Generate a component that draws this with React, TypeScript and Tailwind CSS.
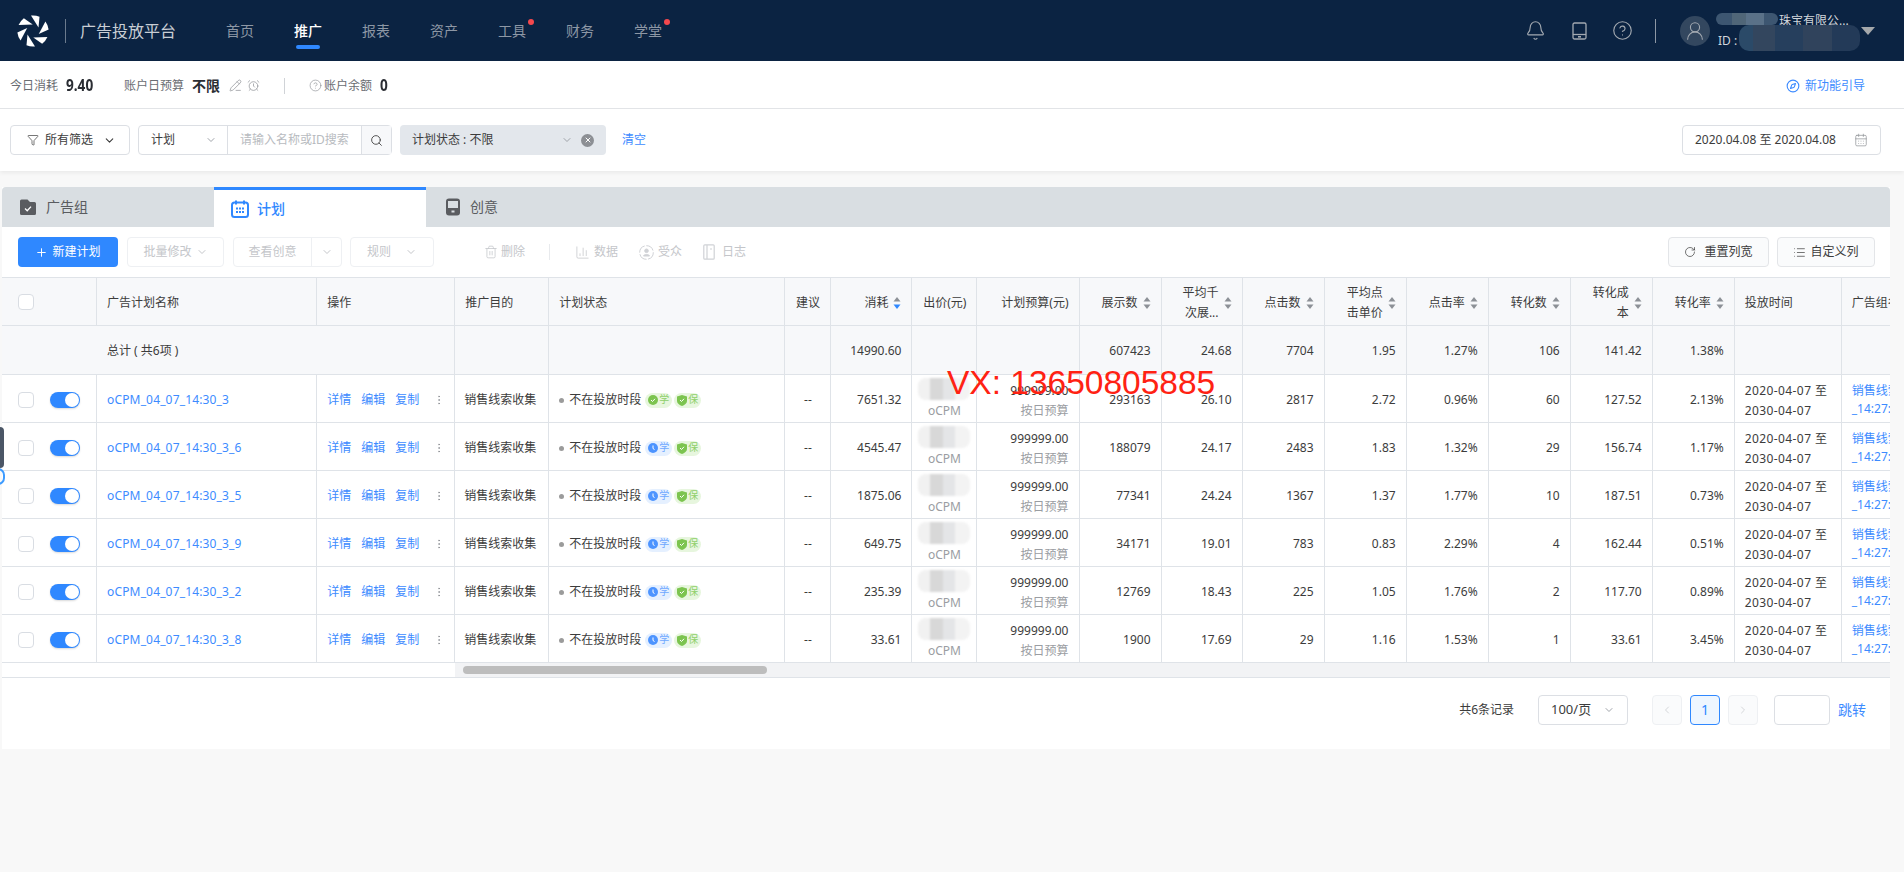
import {
  AlarmClock,
  Bell,
  CalendarDays,
  ChartColumn,
  ChevronDown,
  ChevronLeft,
  ChevronRight,
  CircleHelp,
  Compass,
  EllipsisVertical,
  Filter,
  List,
  PencilLine,
  Plus,
  RotateCw,
  Search,
  Trash2,
  UserRound,
  X,
} from "lucide-react"

const navItems = [
  { label: "首页" },
  { label: "推广", active: true },
  { label: "报表" },
  { label: "资产" },
  { label: "工具", dot: true },
  { label: "财务" },
  { label: "学堂", dot: true },
]

const rows = [
  { name: "oCPM_04_07_14:30_3", learned: true, cost: "7651.32", show: "293163", cpm: "26.10", click: "2817", cpc: "2.72", ctr: "0.96%", conv: "60", cpa: "127.52", cvr: "2.13%" },
  { name: "oCPM_04_07_14:30_3_6", cost: "4545.47", show: "188079", cpm: "24.17", click: "2483", cpc: "1.83", ctr: "1.32%", conv: "29", cpa: "156.74", cvr: "1.17%" },
  { name: "oCPM_04_07_14:30_3_5", cost: "1875.06", show: "77341", cpm: "24.24", click: "1367", cpc: "1.37", ctr: "1.77%", conv: "10", cpa: "187.51", cvr: "0.73%" },
  { name: "oCPM_04_07_14:30_3_9", cost: "649.75", show: "34171", cpm: "19.01", click: "783", cpc: "0.83", ctr: "2.29%", conv: "4", cpa: "162.44", cvr: "0.51%" },
  { name: "oCPM_04_07_14:30_3_2", cost: "235.39", show: "12769", cpm: "18.43", click: "225", cpc: "1.05", ctr: "1.76%", conv: "2", cpa: "117.70", cvr: "0.89%" },
  { name: "oCPM_04_07_14:30_3_8", cost: "33.61", show: "1900", cpm: "17.69", click: "29", cpc: "1.16", ctr: "1.53%", conv: "1", cpa: "33.61", cvr: "3.45%" },
]

const colWidths = [95, 220, 138, 94, 236, 46, 81, 65, 102, 82, 81, 82, 82, 82, 82, 82, 82, 107, 120]

function Logo() {
  return (
    <svg width="32" height="32" viewBox="-16 -16 32 32" fill="#fff">
      {[0, 60, 120, 180, 240, 300].map((a) => (
        <path key={a} transform={`rotate(${a})`} d="M-2 -15.5 Q2.500 -16 6.500 -14.300 L5.500 -3.500 Z" />
      ))}
    </svg>
  )
}

function TabletIcon({ color = "currentColor" }: { color?: string }) {
  return (
    <svg width="15" height="18" viewBox="0 0 15 18" fill="none" stroke={color} strokeWidth="1.3">
      <rect x="1" y="1" width="13" height="16" rx="1.5" />
      <path d="M1 12.5h13" />
      <path d="M6 14.8h3" strokeWidth="1.6" />
    </svg>
  )
}

function GroupIcon() {
  return (
    <svg width="18" height="18" viewBox="0 0 18 18">
      <path d="M1 3a1.5 1.5 0 0 1 1.5-1.5h6L11 4h4.5A1.5 1.5 0 0 1 17 5.5V15.5a1.5 1.5 0 0 1-1.5 1.5h-13A1.5 1.5 0 0 1 1 15.5z" fill="#5a5c60" />
      <path d="M6 10.5l2.2 2.2L12 8.6" fill="none" stroke="#fff" strokeWidth="1.3" />
    </svg>
  )
}

function PlanIcon() {
  return (
    <svg width="18" height="18" viewBox="0 0 18 18">
      <rect x="1" y="2.5" width="16" height="14.5" rx="2.5" fill="none" stroke="#2f88ff" strokeWidth="2" />
      <path d="M5 0.5v4M13 0.5v4" stroke="#2f88ff" strokeWidth="2" />
      <path d="M5 7.5h2v2H5zM8 7.5h2v2H8zM11 7.5h2v2h-2zM5 11h2v2H5zM8 11h2v2H8zM11 11h2v2h-2z" fill="#2f88ff" />
    </svg>
  )
}

function CreativeIcon() {
  return (
    <svg width="16" height="18" viewBox="0 0 16 18">
      <rect x="1" y="0.5" width="14" height="17" rx="3" fill="#5a5c60" />
      <rect x="3" y="3" width="10" height="7" fill="#d9dee2" />
      <rect x="6.5" y="12.5" width="3" height="2" fill="#d9dee2" />
    </svg>
  )
}

function LogBookIcon() {
  return (
    <svg width="12" height="16" viewBox="0 0 12 16" fill="none" stroke="#d0d2d6" strokeWidth="1.2">
      <rect x="0.8" y="0.8" width="10.4" height="14.4" rx="1" />
      <path d="M4 1v14M7 5h2" />
    </svg>
  )
}

function AudienceIcon() {
  return (
    <svg width="15" height="15" viewBox="0 0 15 15" fill="none" stroke="#d0d2d6">
      <circle cx="7.5" cy="7.5" r="6.8" strokeDasharray="9 1.5" />
      <circle cx="7.5" cy="5.8" r="1.8" fill="#d0d2d6" />
      <path d="M4.5 11c.5-2 5.500-2 6 0z" fill="#d0d2d6" />
    </svg>
  )
}

function SortIcon({ down }: { down?: boolean }) {
  return (
    <svg width="8" height="14" viewBox="0 0 8 14" className="shrink-0">
      <path d="M4 1l3.500 4.500h-7z" fill="#8c9096" />
      <path d="M4 13l3.500-4.500h-7z" fill={down ? "#2f88ff" : "#8c9096"} />
    </svg>
  )
}

function Checkbox() {
  return <span className="block w-4 h-4 rounded-sm border border-[#d9dde3] bg-white" />
}

function Badge({ kind, label, learned }: { kind: "blue" | "green"; label: string; learned?: boolean }) {
  return (
    <span
      className={
        kind === "blue"
          ? "flex items-center gap-px h-[15px] w-[27px] pl-[3px] rounded-full bg-[#e5f0ff] text-[#6fa8ff] text-[10px]"
          : "flex items-center gap-px h-[15px] w-[27px] pl-[3px] rounded-full bg-[#e7f6de] text-[#8fd06a] text-[10px]"
      }
    >
      {kind === "blue" ? (
        <svg width="10" height="10" viewBox="0 0 10 10">
          <circle cx="5" cy="5" r="5" fill="#4d94ff" />
          <path d="M5 2.500v3l1.500 1" fill="none" stroke="#fff" />
        </svg>
      ) : learned ? (
        <svg width="10" height="10" viewBox="0 0 10 10">
          <circle cx="5" cy="5" r="5" fill="#7cc44f" />
          <path d="M3 5l1.500 1.500L7 3.800" fill="none" stroke="#fff" />
        </svg>
      ) : (
        <svg width="10" height="11" viewBox="0 0 10 11">
          <path d="M5 0l5 1.500V6c0 2.500-2.500 4-5 5-2.500-1-5-2.500-5-5V1.500z" fill="#7cc44f" />
          <path d="M3 5l1.500 1.500L7 3.800" fill="none" stroke="#fff" />
        </svg>
      )}
      {label}
    </span>
  )
}

function Mosaic() {
  return (
    <div className="flex w-[52px] h-[22px] rounded-lg overflow-hidden blur-[1px] mb-[1px]">
      <span className="w-[12px] bg-[#f1f1f1]" />
      <span className="w-[13px] bg-[#d8d8d8]" />
      <span className="w-[12px] bg-[#e4e5e7]" />
      <span className="w-[15px] bg-[#f3f3f3]" />
    </div>
  )
}

const line = "border-r border-b border-[#dfe3e8]"
const headLeft = `${line} pl-[10px] pt-[3px] text-left font-normal`
const bodyCell = `${line} pt-[3px]`
const numCell = `${line} pt-[3px] pr-[10px] text-right`
const totalCell = `${line} pt-[2px] pr-[10px] text-right`

function HeadNum({ label, sort = true, down, wrap }: { label: string; sort?: boolean; down?: boolean; wrap?: boolean }) {
  return (
    <th className={`${line} px-[10px] pt-[3px] font-normal`}>
      <div className="flex items-center justify-end gap-[5px]">
        <span className={wrap ? "w-[36px] text-right leading-5" : "whitespace-nowrap"}>{label}</span>
        {sort && <SortIcon down={down} />}
      </div>
    </th>
  )
}

export default function App() {
  return (
    <div className="relative h-[872px] w-[1904px] overflow-hidden bg-[#f8f8f8] text-xs text-[#3c3c3c] font-['Noto_Sans','Noto_Sans_CJK_SC',sans-serif]">
      {/* top bar */}
      <header className="flex items-center h-[61px] bg-[#0b2342]">
        <div className="ml-[17px]">
          <Logo />
        </div>
        <span className="ml-[16px] w-px h-6 bg-[#6b7a8d]" />
        <span className="ml-[14px] text-base text-[#c9ced5]">广告投放平台</span>
        <nav className="ml-[50px] flex gap-[40px] text-sm text-[#8d97a5]">
          {navItems.map((n) => (
            <div key={n.label} className="relative h-[61px] flex items-center">
              <span className={n.active ? "text-white font-medium" : ""}>{n.label}</span>
              {n.dot && <span className="absolute left-[30px] top-[19px] w-[6px] h-[6px] rounded-full bg-[#f5484d]" />}
              {n.active && <span className="absolute left-[2px] bottom-[12px] w-6 h-1 rounded-sm bg-[#2f88ff]" />}
            </div>
          ))}
        </nav>
        <div className="ml-auto flex items-center text-[#a3a9b1]">
          <Bell size={21} strokeWidth={1.3} />
          <span className="ml-[26px]">
            <TabletIcon />
          </span>
          <span className="ml-[25px]">
            <CircleHelp size={21} strokeWidth={1.3} />
          </span>
          <span className="ml-[22px] w-px h-6 bg-[#8d97a5]" />
          <span className="ml-[24px] w-[30px] h-[30px] rounded-full bg-[#33475f] flex items-center justify-center">
            <UserRound size={22} strokeWidth={1.2} />
          </span>
          <div className="relative ml-[8px] w-[129px] h-[40px] text-[#d2d6db] whitespace-nowrap">
            <div className="flex flex-col h-full">
              <span className="pl-[61px] leading-5">珠宝有限公...</span>
              <span className="leading-5">ID :</span>
            </div>
            <div className="absolute left-[-2px] top-[2px] flex w-[62px] h-[12px] rounded-full overflow-hidden">
              <span className="w-[16px] bg-[#3d5671]" />
              <span className="w-[14px] bg-[#506678]" />
              <span className="w-[18px] bg-[#5a7188]" />
              <span className="w-[14px] bg-[#3d5671]" />
            </div>
            <div className="absolute left-[21px] top-[14px] flex w-[121px] h-[26px] rounded-[10px] overflow-hidden">
              <span className="w-[14px] bg-[#2b4a68]" />
              <span className="w-[22px] bg-[#33465e]" />
              <span className="w-[28px] bg-[#263f5d]" />
              <span className="w-[29px] bg-[#30435c]" />
              <span className="w-[28px] bg-[#233a58]" />
            </div>
          </div>
          <span className="relative ml-[14px] mr-[29px] w-0 h-0 border-x-[7px] border-x-transparent border-t-[8px] border-t-[#a5a8ab]" />
        </div>
      </header>

      {/* account stats */}
      <div className="flex items-center h-[48px] pl-[10px] pt-[2px] bg-white border-b border-[#e3e5e8] text-[#6a6d72]">
        <span>今日消耗</span>
        <span className="ml-[8px] w-[25px] text-[16px] font-bold text-[#2a2d33] scale-x-[0.85] origin-left">9.40</span>
        <span className="ml-[33px]">账户日预算</span>
        <span className="ml-[8px] text-sm font-bold text-[#2a2d33]">不限</span>
        <PencilLine size={13} strokeWidth={1.3} className="ml-[9px] text-[#8c8f94]" />
        <AlarmClock size={13} strokeWidth={1.3} className="ml-[5px] text-[#8c8f94]" />
        <span className="ml-[24px] w-px h-4 bg-[#d0d3d7]" />
        <CircleHelp size={13} strokeWidth={1.2} className="ml-[24px] text-[#8c8f94]" />
        <span className="ml-[2px]">账户余额</span>
        <span className="ml-[8px] text-[16px] font-bold text-[#2a2d33] scale-x-[0.85] origin-left">0</span>
        <span className="ml-auto mr-[39px] flex items-center gap-[5px] text-[#3d8bff]">
          <Compass size={14} strokeWidth={1.9} />
          新功能引导
        </span>
      </div>

      {/* filters */}
      <div className="flex items-center h-[62px] pl-[10px] bg-white shadow-[0_2px_4px_rgba(0,0,0,0.06)]">
        <button className="flex items-center w-[120px] h-[30px] pl-[16px] rounded border border-[#dcdfe4] bg-white">
          <Filter size={12} strokeWidth={1.4} />
          <span className="ml-[6px]">所有筛选</span>
          <ChevronDown size={13} className="ml-[10px]" />
        </button>
        <div className="ml-[8px] flex items-center w-[254px] h-[30px] rounded border border-[#dcdfe4] bg-white">
          <span className="flex items-center justify-between w-[89px] h-full pl-[12px] pr-[10px] border-r border-[#dcdfe4]">
            计划
            <ChevronDown size={12} className="text-[#a0a4aa]" />
          </span>
          <span className="flex-1 pl-[12px] text-[#b8bbc0]">请输入名称或ID搜索</span>
          <span className="flex items-center justify-center w-[30px] h-full border-l border-[#dcdfe4] bg-[#f7f8fa]">
            <Search size={13} strokeWidth={1.6} />
          </span>
        </div>
        <div className="ml-[8px] flex items-center w-[206px] h-[30px] pl-[12px] pr-[12px] rounded bg-[#e3e7ec]">
          <span>计划状态 : 不限</span>
          <ChevronDown size={12} className="ml-auto text-[#a0a4aa]" />
          <span className="ml-[8px] flex items-center justify-center w-[13px] h-[13px] rounded-full bg-[#8c8f94]">
            <X size={8} strokeWidth={3} className="text-white" />
          </span>
        </div>
        <span className="ml-[16px] text-[#3d8bff]">清空</span>
        <div className="ml-auto mr-[23px] flex items-center justify-between w-[199px] h-[30px] pl-[12px] pr-[12px] rounded border border-[#dcdfe4] text-[#3c3c3c]">
          <span>2020.04.08 至 2020.04.08</span>
          <CalendarDays size={14} strokeWidth={1.2} className="text-[#8c8f94]" />
        </div>
      </div>

      {/* main card */}
      <div className="relative mt-[16px] ml-[2px] w-[1888px] h-[562px] bg-white">
        <div className="flex h-[40px] rounded-t bg-[#d9dee2] text-sm text-[#5a5c60]">
          <div className="flex items-center w-[212px] pl-[17px] gap-[9px]">
            <GroupIcon />
            广告组
          </div>
          <div className="flex items-center w-[212px] pl-[17px] gap-[8px] bg-white border-t-[3px] border-[#2f88ff] text-[#2f88ff] font-medium">
            <PlanIcon />
            计划
          </div>
          <div className="flex items-center pl-[19px] gap-[9px]">
            <CreativeIcon />
            创意
          </div>
        </div>

        {/* toolbar */}
        <div className="flex items-center h-[50px] pl-[16px] text-[#c4c6ca]">
          <button className="flex items-center justify-center gap-[4px] w-[100px] h-[30px] rounded bg-[#2f88ff] text-white">
            <Plus size={13} strokeWidth={1.8} />
            新建计划
          </button>
          <button className="ml-[9px] flex items-center justify-center gap-[4px] w-[97px] h-[30px] rounded border border-[#eef0f3]">
            批量修改
            <ChevronDown size={12} />
          </button>
          <div className="ml-[9px] flex items-center w-[109px] h-[30px] rounded border border-[#eef0f3]">
            <span className="flex-1 text-center border-r border-[#eef0f3] leading-[28px]">查看创意</span>
            <span className="flex justify-center w-[29px]">
              <ChevronDown size={12} />
            </span>
          </div>
          <button className="ml-[8px] flex items-center justify-between w-[84px] h-[30px] px-[16px] rounded border border-[#eef0f3]">
            规则
            <ChevronDown size={12} />
          </button>
          <Trash2 size={14} strokeWidth={1.3} className="ml-[50px]" />
          <span className="ml-[3px]">删除</span>
          <span className="ml-[24px] w-px h-4 bg-[#e8eaed]" />
          <ChartColumn size={15} strokeWidth={1.2} className="ml-[25px]" />
          <span className="ml-[4px]">数据</span>
          <span className="ml-[21px]">
            <AudienceIcon />
          </span>
          <span className="ml-[4px]">受众</span>
          <span className="ml-[21px]">
            <LogBookIcon />
          </span>
          <span className="ml-[7px]">日志</span>
          <button className="ml-auto flex items-center justify-center gap-[8px] w-[101px] h-[30px] rounded border border-[#e3e5e8] bg-[#fafbfc] text-[#3c3c3c]">
            <RotateCw size={12} strokeWidth={1.4} />
            重置列宽
          </button>
          <button className="ml-[8px] mr-[15px] flex items-center justify-center gap-[4px] w-[98px] h-[30px] rounded border border-[#e3e5e8] bg-[#fafbfc] text-[#3c3c3c]">
            <List size={13} strokeWidth={1.3} />
            自定义列
          </button>
        </div>

        {/* plans table */}
        <div className="overflow-hidden">
          <table className="table-fixed border-separate border-spacing-0 w-[1960px] border-t border-[#dfe3e8]">
            <colgroup>
              {colWidths.map((w, i) => (
                <col key={i} style={{ width: w }} />
              ))}
            </colgroup>
            <thead>
              <tr className="h-[48px] bg-[#f7f8fa] text-[#3c3c3c]">
                <th className={`${line} pl-[16px]`}>
                  <Checkbox />
                </th>
                <th className={headLeft}>广告计划名称</th>
                <th className={headLeft}>操作</th>
                <th className={headLeft}>推广目的</th>
                <th className={headLeft}>计划状态</th>
                <th className={`${line} pt-[3px] text-center font-normal`}>建议</th>
                <HeadNum label="消耗" down />
                <HeadNum label="出价(元)" sort={false} />
                <HeadNum label="计划预算(元)" sort={false} />
                <HeadNum label="展示数" />
                <HeadNum label="平均千次展..." wrap />
                <HeadNum label="点击数" />
                <HeadNum label="平均点击单价" wrap />
                <HeadNum label="点击率" />
                <HeadNum label="转化数" />
                <HeadNum label="转化成本" wrap />
                <HeadNum label="转化率" />
                <th className={headLeft}>投放时间</th>
                <th className="border-b border-[#dfe3e8] pl-[10px] pt-[3px] text-left font-normal whitespace-nowrap overflow-hidden">广告组名称</th>
              </tr>
            </thead>
            <tbody>
              <tr className="h-[49px] bg-[#f7f8fa]">
                <td colSpan={3} className={`${line} pt-[2px] pl-[105px]`}>总计 ( 共6项 )</td>
                <td className={line} />
                <td className={line} />
                <td className={line} />
                <td className={totalCell}>14990.60</td>
                <td className={line} />
                <td className={line} />
                <td className={totalCell}>607423</td>
                <td className={totalCell}>24.68</td>
                <td className={totalCell}>7704</td>
                <td className={totalCell}>1.95</td>
                <td className={totalCell}>1.27%</td>
                <td className={totalCell}>106</td>
                <td className={totalCell}>141.42</td>
                <td className={totalCell}>1.38%</td>
                <td className={line} />
                <td className="border-b border-[#dfe3e8]" />
              </tr>
              {rows.map((r) => (
                <tr key={r.name} className="h-[48px]">
                  <td className={`${bodyCell} pl-[16px]`}>
                    <div className="flex items-center gap-[16px]">
                      <Checkbox />
                      <span className="flex items-center justify-end w-[30px] h-4 pr-[1px] rounded-full bg-[#2f88ff] shadow-[0_1px_2px_rgba(0,0,0,0.15)]">
                        <span className="w-[14px] h-[14px] rounded-full bg-white" />
                      </span>
                    </div>
                  </td>
                  <td className={`${bodyCell} pl-[10px] text-[#3d8bff] tracking-[0.15px]`}>{r.name}</td>
                  <td className={`${bodyCell} pl-[10px] text-[#3d8bff]`}>
                    <div className="flex items-center gap-[10px]">
                      <span>详情</span>
                      <span>编辑</span>
                      <span>复制</span>
                      <EllipsisVertical size={12} strokeWidth={1.5} className="ml-[4px] text-[#8c8f94]" />
                    </div>
                  </td>
                  <td className={`${bodyCell} pl-[9px] whitespace-nowrap`}>销售线索收集</td>
                  <td className={`${bodyCell} pl-[10px]`}>
                    <div className="flex items-center">
                      <span className="w-[5px] h-[5px] rounded-full bg-[#9b9b9b]" />
                      <span className="ml-[5px] mr-[4px]">不在投放时段</span>
                      <div className="flex gap-[2px]">
                        {r.learned ? <Badge kind="green" label="学" learned /> : <Badge kind="blue" label="学" />}
                        <Badge kind="green" label="保" />
                      </div>
                    </div>
                  </td>
                  <td className={`${bodyCell} text-center`}>--</td>
                  <td className={numCell}>{r.cost}</td>
                  <td className={`${line} pt-[2px] text-[#9a9da2]`}>
                    <div className="flex flex-col items-center">
                      <Mosaic />
                      <span className="leading-5">oCPM</span>
                    </div>
                  </td>
                  <td className={`${line} pr-[10px] text-right leading-5 pt-[4px]`}>
                    <div>999999.00</div>
                    <div className="text-[#9a9da2]">按日预算</div>
                  </td>
                  <td className={numCell}>{r.show}</td>
                  <td className={numCell}>{r.cpm}</td>
                  <td className={numCell}>{r.click}</td>
                  <td className={numCell}>{r.cpc}</td>
                  <td className={numCell}>{r.ctr}</td>
                  <td className={numCell}>{r.conv}</td>
                  <td className={numCell}>{r.cpa}</td>
                  <td className={numCell}>{r.cvr}</td>
                  <td className={`${line} pl-[10px] leading-5 pt-[4px] whitespace-nowrap tracking-[0.4px]`}>
                    <div>2020-04-07 至</div>
                    <div>2030-04-07</div>
                  </td>
                  <td className="border-b border-[#dfe3e8] pl-[10px] pt-[2px] leading-[18px] text-[#3d8bff] whitespace-nowrap overflow-hidden">
                    <div>销售线索收集</div>
                    <div>_14:27:30</div>
                  </td>
                </tr>
              ))}
            </tbody>
          </table>
        </div>

        {/* horizontal scrollbar */}
        <div className="flex h-[15px] border-b border-[#dfe3e8]">
          <div className="w-[453px]" />
          <div className="flex-1 flex items-center pl-[8px] bg-[#f2f3f5]">
            <span className="block w-[304px] h-2 rounded bg-[#bdbdbd]" />
          </div>
        </div>

        {/* pagination */}
        <div className="flex items-center justify-end h-[70px] pb-[6px] pr-[24px]">
          <span>共6条记录</span>
          <div className="ml-[24px] flex items-center justify-between w-[90px] h-[30px] pl-[12px] pr-[12px] rounded border border-[#dcdfe4] text-[13px]">
            100/页
            <ChevronDown size={12} className="text-[#a0a4aa]" />
          </div>
          <span className="ml-[24px] flex items-center justify-center w-[30px] h-[30px] rounded border border-[#eef0f3] bg-[#fafbfc] text-[#d5d7da]">
            <ChevronLeft size={12} />
          </span>
          <span className="ml-[8px] flex items-center justify-center w-[30px] h-[30px] rounded border border-[#2f88ff] bg-[#eef6ff] text-[#2f88ff] text-sm">1</span>
          <span className="ml-[8px] flex items-center justify-center w-[30px] h-[30px] rounded border border-[#eef0f3] bg-[#fafbfc] text-[#d5d7da]">
            <ChevronRight size={12} />
          </span>
          <span className="ml-[16px] w-[56px] h-[30px] rounded border border-[#dcdfe4]" />
          <span className="ml-[8px] text-sm text-[#3d8bff]">跳转</span>
        </div>

        {/* red watermark lying over the table */}
        <div className="absolute left-[945px] top-[179px] text-[33.5px] leading-none text-[#ff2213] whitespace-nowrap font-['Liberation_Sans',sans-serif]">
          VX: 13650805885
        </div>
      </div>

      {/* side handle at the left page edge */}
      <div className="absolute left-0 top-[427px] w-1 h-[41px] rounded-r-sm bg-[#4b5666]" />
      <div className="absolute left-[-9px] top-[468px] w-[14px] h-[17px] rounded-full border-2 border-[#3d9bff]" />
    </div>
  )
}
